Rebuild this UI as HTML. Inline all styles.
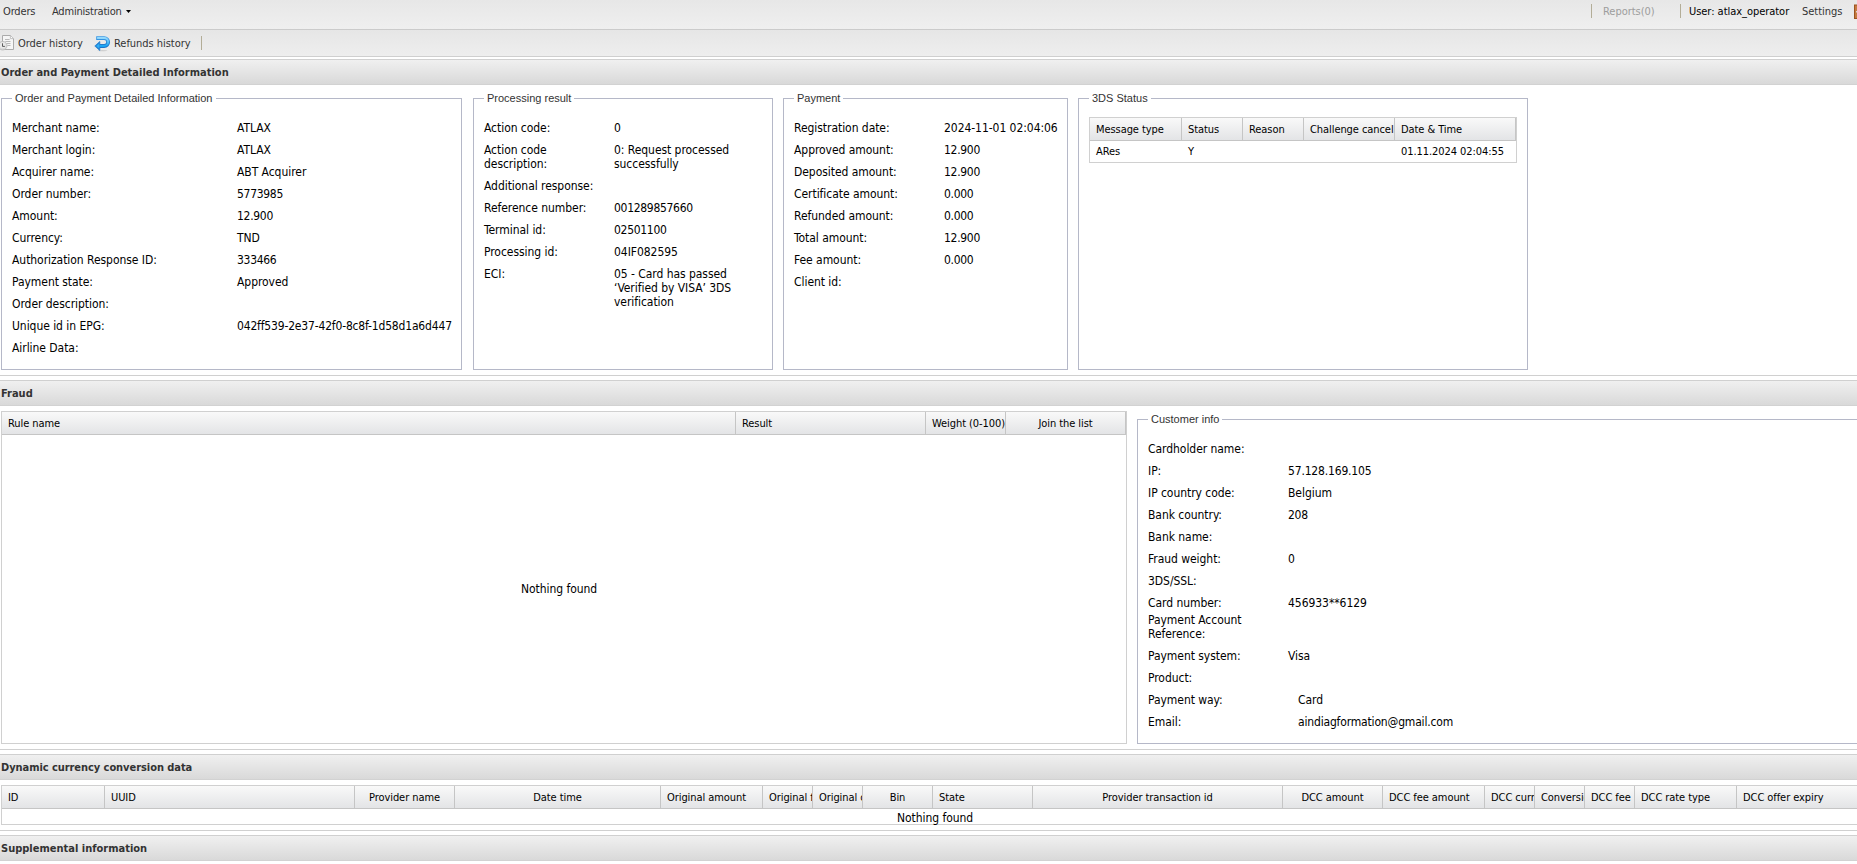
<!DOCTYPE html>
<html lang="en">
<head>
<meta charset="utf-8">
<title>Order and Payment Detailed Information</title>
<style>
html,body{margin:0;padding:0;}
body{width:1857px;height:864px;overflow:hidden;background:#fff;position:relative;
  font-family:"DejaVu Sans Condensed","DejaVu Sans","Liberation Sans",sans-serif;font-stretch:condensed;
  font-size:12px;color:#000;letter-spacing:-0.05px;-webkit-font-smoothing:antialiased;}
div,span{box-sizing:border-box;}
.abs{position:absolute;}

/* top menu bar */
#menubar{position:absolute;left:0;top:0;width:1857px;height:30px;border-bottom:1px solid #cbcbcb;
  background:linear-gradient(#e7e7e7,#efefef);}
#toolbar{position:absolute;left:0;top:30px;width:1857px;height:27px;border-bottom:1px solid #cfcfcf;
  background:linear-gradient(#e6e6e6,#eeeeee);}
.t11{position:absolute;font-size:11px;line-height:14px;letter-spacing:-0.04px;white-space:nowrap;color:#333;}
.sep{position:absolute;width:1px;height:14px;background:#b3ad97;}

/* panel headers */
.phead{position:absolute;left:0;width:1857px;height:26px;border-top:1px solid #d0d0d0;border-bottom:1px solid #d2d2d2;
  background:linear-gradient(#f0f0f0,#d9d9d9);}
.phead span{position:absolute;left:1px;top:5px;font-weight:bold;font-size:11px;line-height:15px;letter-spacing:0;color:#333;white-space:nowrap;}
.hline{position:absolute;left:0;width:1857px;height:1px;background:#d0d0d0;}

/* fieldsets */
.fs{position:absolute;border:1px solid #b5b8c8;}
.legend{position:absolute;top:-8px;left:10px;padding:0 3px;background:#fff;
  font-family:"Liberation Sans",sans-serif;font-stretch:normal;font-size:11px;line-height:14px;letter-spacing:0;color:#333;white-space:nowrap;}
.rows{position:absolute;left:10px;top:19px;right:10px;}
.row{display:flex;margin-bottom:5px;min-height:17px;line-height:14px;}
.row .l{flex:none;padding-top:3px;}
.row .v{flex:1 1 auto;padding-top:3px;}
.row .v.n{letter-spacing:-0.3px;}

/* grids */
.grid{position:absolute;border:1px solid #d0d0d0;background:#fff;}
.ghead{position:absolute;left:0;top:0;right:0;height:23px;border-bottom:1px solid #c5c5c5;
  background:linear-gradient(#f9f9f9,#e3e4e6);overflow:hidden;}
.col{position:absolute;top:0;height:22px;border-right:1px solid #c5c5c5;overflow:hidden;
  font-size:11px;line-height:13px;letter-spacing:-0.07px;padding:5px 0 0 6px;white-space:nowrap;}
.col.c{text-align:center;padding-left:0;}
.cell{position:absolute;font-size:11px;line-height:13px;letter-spacing:-0.07px;white-space:nowrap;}
.nf{position:absolute;font-size:12px;line-height:14px;white-space:nowrap;}
</style>
</head>
<body>

<!-- ===== top menu bar ===== -->
<div id="menubar">
  <span class="t11" style="left:3px;top:5px;letter-spacing:-0.15px">Orders</span>
  <span class="t11" style="left:52px;top:5px;letter-spacing:-0.2px">Administration</span>
  <svg class="abs" style="left:126px;top:10px" width="5" height="3" viewBox="0 0 5 3"><path d="M0 0h5L2.5 3z" fill="#000"/></svg>
  <div class="sep" style="left:1591px;top:4px;"></div>
  <span class="t11" style="left:1603px;top:5px;color:#9d9d9d;">Reports(0)</span>
  <div class="sep" style="left:1680px;top:4px;"></div>
  <span class="t11" style="left:1689px;top:5px;color:#000;">User: atlax_operator</span>
  <span class="t11" style="left:1802px;top:5px;">Settings</span>
  <svg class="abs" style="left:1854px;top:4px" width="3" height="15" viewBox="0 0 3 15">
    <rect x="0" y="0.5" width="3" height="14.5" fill="#9c531f"/>
    <rect x="1" y="1.5" width="2" height="12.5" fill="#c47a40"/>
    <rect x="2" y="7" width="1" height="1.5" fill="#d8d8d8"/>
  </svg>
</div>

<!-- ===== toolbar ===== -->
<div id="toolbar">
  <!-- order history icon (document + clock) -->
  <svg class="abs" style="left:-2px;top:5px" width="16" height="16" viewBox="0 0 16 16">
    <path d="M4.5 0.5H12.4L15.5 3.6V14.5H4.5z" fill="#f6f6f6" stroke="#ababab"/>
    <path d="M12.4 0.8V3.6H15.2" fill="#fdfdfd" stroke="#bcbcbc" stroke-width="0.9"/>
    <path d="M7 4.5h4.6M7.3 6.5h5.2M8.5 8.5h4M9.3 10.5h3.2" stroke="#b9b9b9" fill="none"/>
    <circle cx="4.7" cy="10.7" r="4.3" fill="#dadada" stroke="#bdbdbd" stroke-width="0.9"/>
    <circle cx="4.7" cy="10.3" r="3" fill="#e9e9e9"/>
    <path d="M4.5 8.3V11.4H6.9" stroke="#4c4c4c" stroke-width="0.9" fill="none"/>
  </svg>
  <span class="t11" style="left:18px;top:7px;">Order history</span>
  <!-- refunds history icon (blue undo arrow) -->
  <svg class="abs" style="left:94px;top:5px" width="17" height="17" viewBox="0 0 17 17">
    <defs>
      <linearGradient id="bl" x1="0" y1="0" x2="0" y2="1"><stop offset="0" stop-color="#95d9fc"/><stop offset="1" stop-color="#18a4f3"/></linearGradient>
      <linearGradient id="bd" x1="0" y1="0" x2="0" y2="1"><stop offset="0" stop-color="#3b9ae6"/><stop offset="1" stop-color="#1e74c8"/></linearGradient>
    </defs>
    <ellipse cx="8.3" cy="15.6" rx="5.2" ry="0.7" fill="#000" opacity="0.13"/>
    <path d="M2.2 3.1H10.2A3.95 3.95 0 0 1 10.2 11H5.5" fill="none" stroke="url(#bd)" stroke-width="3.9" stroke-linecap="butt" stroke-linejoin="round"/>
    <path d="M0.8 11L5.8 6.5V15.5z" fill="#2480d2" stroke="#2480d2" stroke-width="0.8" stroke-linejoin="round"/>
    <path d="M3.1 3.1H10.2A3.95 3.95 0 0 1 10.2 11H5.5" fill="none" stroke="url(#bl)" stroke-width="2" stroke-linecap="butt" stroke-linejoin="round"/>
    <path d="M2.2 11L5.2 8.4V13.6z" fill="#2fb0f6"/>
  </svg>
  <span class="t11" style="left:114px;top:7px;">Refunds history</span>
  <div class="sep" style="left:201px;top:6px;"></div>
</div>

<!-- ===== panel 1: Order and Payment Detailed Information ===== -->
<div class="phead" style="top:59px;"><span>Order and Payment Detailed Information</span></div>

<div class="fs" style="left:1px;top:98px;width:461px;height:272px;">
  <div class="legend">Order and Payment Detailed Information</div>
  <div class="rows">
    <div class="row"><div class="l" style="width:225px">Merchant name:</div><div class="v">ATLAX</div></div>
    <div class="row"><div class="l" style="width:225px">Merchant login:</div><div class="v">ATLAX</div></div>
    <div class="row"><div class="l" style="width:225px">Acquirer name:</div><div class="v">ABT Acquirer</div></div>
    <div class="row"><div class="l" style="width:225px">Order number:</div><div class="v n">5773985</div></div>
    <div class="row"><div class="l" style="width:225px">Amount:</div><div class="v n">12.900</div></div>
    <div class="row"><div class="l" style="width:225px">Currency:</div><div class="v">TND</div></div>
    <div class="row"><div class="l" style="width:225px">Authorization Response ID:</div><div class="v n">333466</div></div>
    <div class="row"><div class="l" style="width:225px">Payment state:</div><div class="v">Approved</div></div>
    <div class="row"><div class="l" style="width:225px">Order description:</div><div class="v"></div></div>
    <div class="row"><div class="l" style="width:225px">Unique id in EPG:</div><div class="v" style="white-space:nowrap;letter-spacing:-0.17px">042ff539-2e37-42f0-8c8f-1d58d1a6d447</div></div>
    <div class="row"><div class="l" style="width:225px">Airline Data:</div><div class="v"></div></div>
  </div>
</div>

<div class="fs" style="left:473px;top:98px;width:300px;height:272px;">
  <div class="legend">Processing result</div>
  <div class="rows">
    <div class="row"><div class="l" style="width:130px">Action code:</div><div class="v n">0</div></div>
    <div class="row"><div class="l" style="width:130px">Action code<br>description:</div><div class="v">0: Request processed<br>successfully</div></div>
    <div class="row"><div class="l" style="width:130px">Additional response:</div><div class="v"></div></div>
    <div class="row"><div class="l" style="width:130px">Reference number:</div><div class="v n">001289857660</div></div>
    <div class="row"><div class="l" style="width:130px">Terminal id:</div><div class="v n">02501100</div></div>
    <div class="row"><div class="l" style="width:130px">Processing id:</div><div class="v">04IF082595</div></div>
    <div class="row"><div class="l" style="width:130px">ECI:</div><div class="v">05 - Card has passed<br>‘Verified by VISA’ 3DS<br>verification</div></div>
  </div>
</div>

<div class="fs" style="left:783px;top:98px;width:285px;height:272px;">
  <div class="legend">Payment</div>
  <div class="rows">
    <div class="row"><div class="l" style="width:150px">Registration date:</div><div class="v" style="white-space:nowrap">2024-11-01 02:04:06</div></div>
    <div class="row"><div class="l" style="width:150px">Approved amount:</div><div class="v n">12.900</div></div>
    <div class="row"><div class="l" style="width:150px">Deposited amount:</div><div class="v n">12.900</div></div>
    <div class="row"><div class="l" style="width:150px">Certificate amount:</div><div class="v n">0.000</div></div>
    <div class="row"><div class="l" style="width:150px">Refunded amount:</div><div class="v n">0.000</div></div>
    <div class="row"><div class="l" style="width:150px">Total amount:</div><div class="v n">12.900</div></div>
    <div class="row"><div class="l" style="width:150px">Fee amount:</div><div class="v n">0.000</div></div>
    <div class="row"><div class="l" style="width:150px">Client id:</div><div class="v"></div></div>
  </div>
</div>

<div class="fs" style="left:1078px;top:98px;width:450px;height:272px;">
  <div class="legend">3DS Status</div>
  <div class="grid" style="left:10px;top:18px;width:428px;height:46px;">
    <div class="ghead">
      <div class="col" style="left:0;width:92px;">Message type</div>
      <div class="col" style="left:92px;width:61px;">Status</div>
      <div class="col" style="left:153px;width:61px;">Reason</div>
      <div class="col" style="left:214px;width:91px;">Challenge cancel</div>
      <div class="col" style="left:305px;width:121px;">Date &amp; Time</div>
    </div>
    <span class="cell" style="left:6px;top:27px;">ARes</span>
    <span class="cell" style="left:98px;top:27px;">Y</span>
    <span class="cell" style="left:311px;top:27px;">01.11.2024 02:04:55</span>
  </div>
</div>

<div class="hline" style="top:375px;"></div>

<!-- ===== panel 2: Fraud ===== -->
<div class="phead" style="top:380px;"><span>Fraud</span></div>

<div class="grid" style="left:1px;top:411px;width:1126px;height:333px;">
  <div class="ghead">
    <div class="col" style="left:0;width:734px;">Rule name</div>
    <div class="col" style="left:734px;width:190px;">Result</div>
    <div class="col" style="left:924px;width:80px;">Weight (0-100)</div>
    <div class="col c" style="left:1004px;width:120px;">Join the list</div>
  </div>
  <span class="nf" style="left:519px;top:170px;">Nothing found</span>
</div>

<div class="fs" style="left:1137px;top:419px;width:730px;height:325px;">
  <div class="legend">Customer info</div>
  <div class="rows">
    <div class="row"><div class="l" style="width:140px">Cardholder name:</div><div class="v"></div></div>
    <div class="row"><div class="l" style="width:140px">IP:</div><div class="v" style="letter-spacing:-0.17px">57.128.169.105</div></div>
    <div class="row"><div class="l" style="width:140px">IP country code:</div><div class="v">Belgium</div></div>
    <div class="row"><div class="l" style="width:140px">Bank country:</div><div class="v n">208</div></div>
    <div class="row"><div class="l" style="width:140px">Bank name:</div><div class="v"></div></div>
    <div class="row"><div class="l" style="width:140px">Fraud weight:</div><div class="v n">0</div></div>
    <div class="row"><div class="l" style="width:140px">3DS/SSL:</div><div class="v"></div></div>
    <div class="row"><div class="l" style="width:140px">Card number:</div><div class="v">456933**6129</div></div>
    <div class="row" style="margin-top:-5px"><div class="l" style="width:140px">Payment Account<br>Reference:</div><div class="v"></div></div>
    <div class="row"><div class="l" style="width:140px">Payment system:</div><div class="v">Visa</div></div>
    <div class="row"><div class="l" style="width:140px">Product:</div><div class="v"></div></div>
    <div class="row"><div class="l" style="width:150px">Payment way:</div><div class="v">Card</div></div>
    <div class="row"><div class="l" style="width:150px">Email:</div><div class="v" style="letter-spacing:-0.17px">aindiagformation@gmail.com</div></div>
  </div>
</div>

<div class="hline" style="top:749px;"></div>

<!-- ===== panel 3: Dynamic currency conversion data ===== -->
<div class="phead" style="top:754px;"><span style="letter-spacing:-0.06px">Dynamic currency conversion data</span></div>

<div class="grid" style="left:1px;top:785px;width:1870px;height:40px;">
  <div class="ghead">
    <div class="col" style="left:0;width:103px;">ID</div>
    <div class="col" style="left:103px;width:250px;">UUID</div>
    <div class="col c" style="left:353px;width:100px;">Provider name</div>
    <div class="col c" style="left:453px;width:206px;">Date time</div>
    <div class="col" style="left:659px;width:102px;">Original amount</div>
    <div class="col" style="left:761px;width:50px;">Original fee</div>
    <div class="col" style="left:811px;width:50px;">Original currency</div>
    <div class="col c" style="left:861px;width:70px;">Bin</div>
    <div class="col" style="left:931px;width:100px;">State</div>
    <div class="col c" style="left:1031px;width:250px;">Provider transaction id</div>
    <div class="col c" style="left:1281px;width:100px;">DCC amount</div>
    <div class="col" style="left:1381px;width:102px;">DCC fee amount</div>
    <div class="col" style="left:1483px;width:50px;">DCC currency</div>
    <div class="col" style="left:1533px;width:50px;">Conversion rate</div>
    <div class="col" style="left:1583px;width:50px;">DCC fee</div>
    <div class="col" style="left:1633px;width:102px;">DCC rate type</div>
    <div class="col" style="left:1735px;width:135px;">DCC offer expiry</div>
  </div>
  <span class="nf" style="left:895px;top:25px;">Nothing found</span>
</div>

<div class="hline" style="top:830px;"></div>

<!-- ===== panel 4: Supplemental information ===== -->
<div class="phead" style="top:835px;"><span>Supplemental information</span></div>

</body>
</html>
